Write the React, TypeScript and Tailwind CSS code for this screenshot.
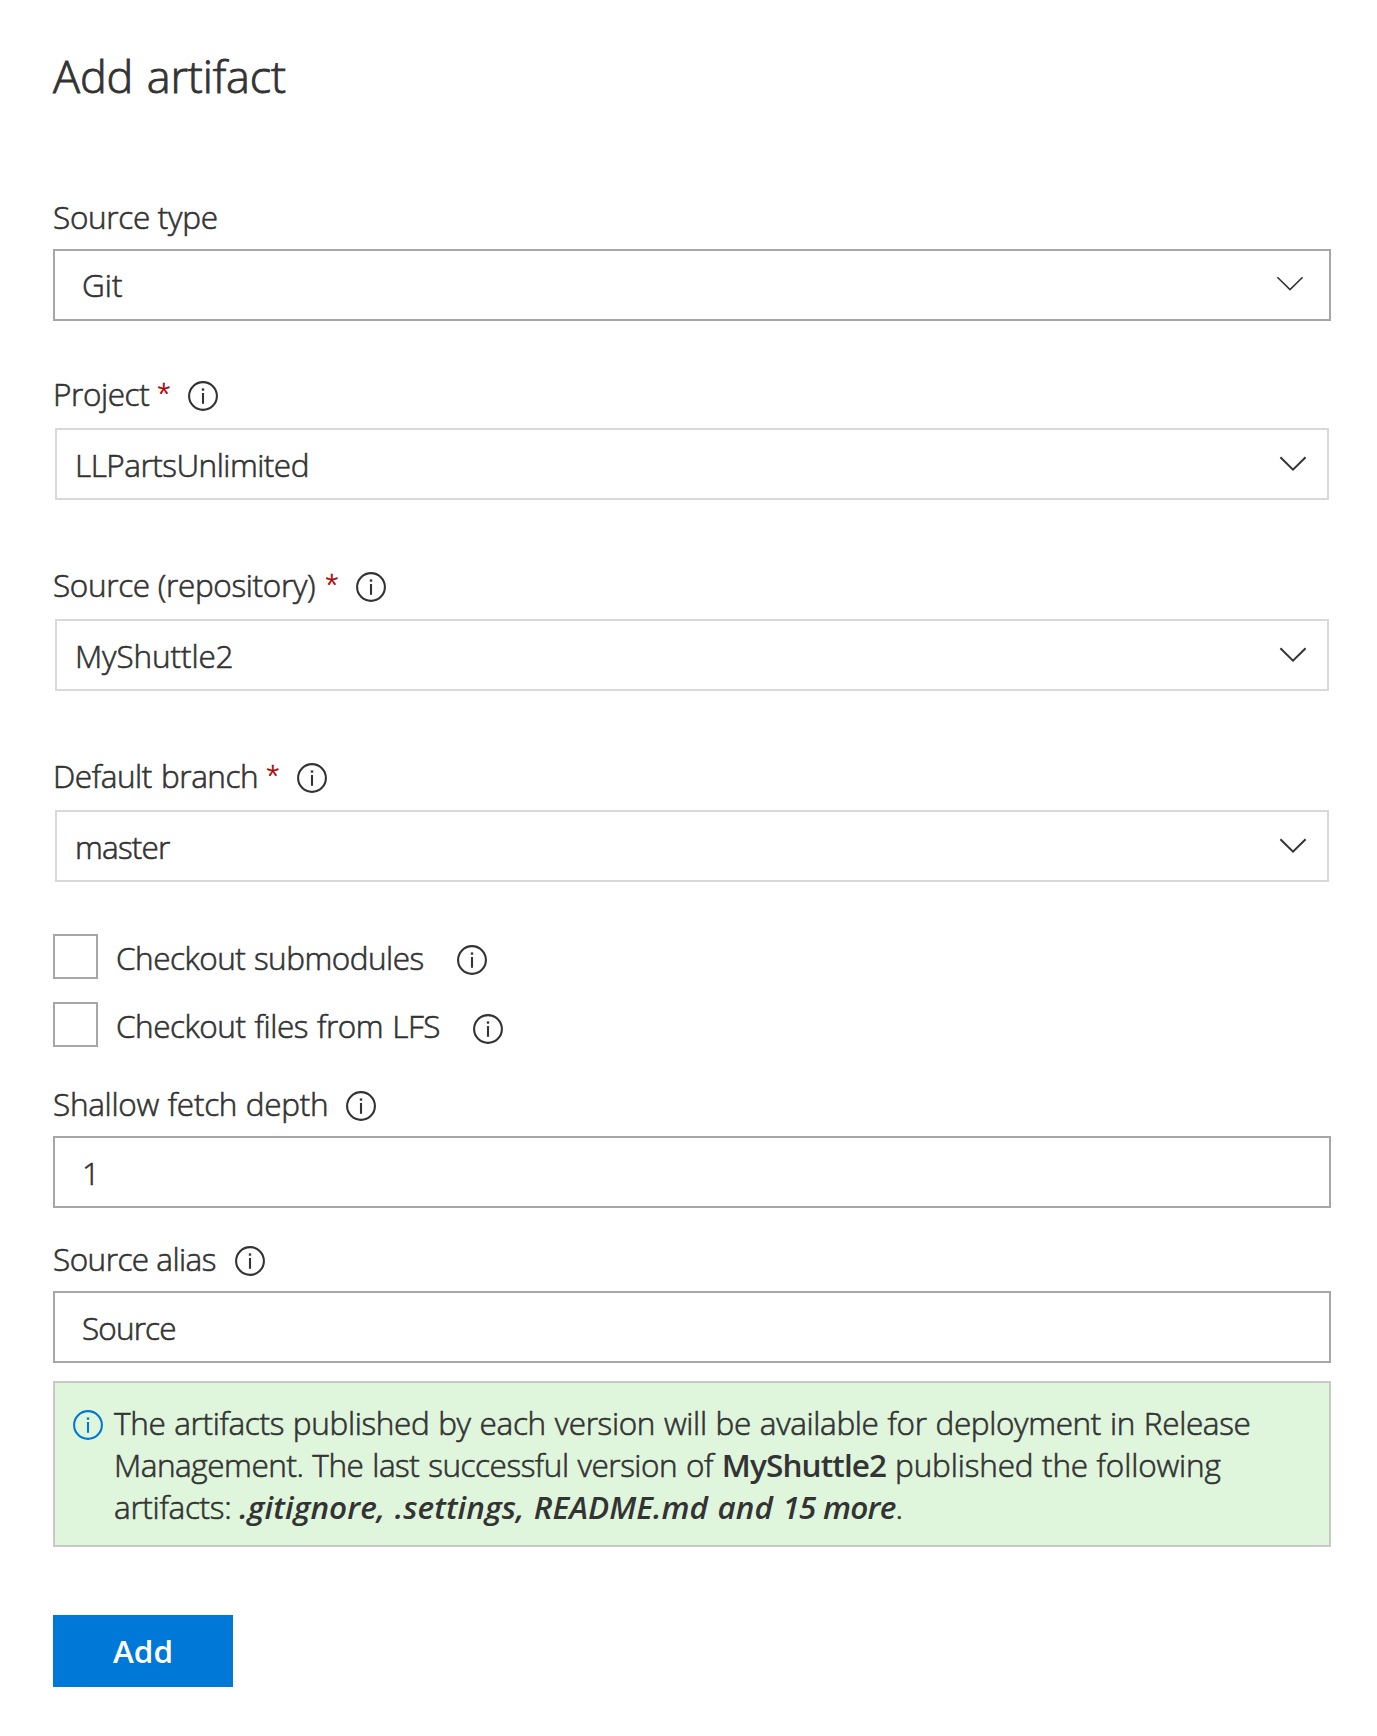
import type { ReactNode } from "react";

function InfoIcon({ className = "" }: { className?: string }) {
  return (
    <svg viewBox="0 0 30 30" className={`h-[30px] w-[30px] shrink-0 ${className}`} fill="none" stroke="currentColor">
      <circle cx="15" cy="15" r="13.9" strokeWidth="2.1" />
      <path d="M15 12V22.8" strokeWidth="2.1" />
      <path d="M15 7.4V9.7" strokeWidth="2.4" />
    </svg>
  );
}

function Chevron({ className = "", weight = 2 }: { className?: string; weight?: number }) {
  return (
    <svg viewBox="0 0 28 16" className={`h-4 w-7 shrink-0 ${className}`} fill="none" stroke="currentColor" strokeWidth={weight}>
      <path d="M1.4 1.2L14 13.6L26.6 1.2" />
    </svg>
  );
}

/** Field caption: text column of a set width, optional required mark, optional info icon. */
function Label({ text, width, spacing, required, info = true, className }: {
  text: string;
  width: string;
  spacing: string;
  required?: boolean;
  info?: boolean;
  className: string;
}) {
  return (
    <div className={`flex h-[42px] items-center ${className}`}>
      <span className={`shrink-0 whitespace-nowrap ${width} ${spacing}`}>{text}</span>
      {required && (
        <span className="-ml-px w-[31px] shrink-0 self-start text-[25px] leading-[38px] text-[#b00000] [-webkit-text-stroke:0.6px]">*</span>
      )}
      {info && <InfoIcon className="mt-[3px]" />}
    </div>
  );
}

function Field({ children, className }: { children: ReactNode; className: string }) {
  return <div className={`flex h-[72px] justify-between border-2 bg-white ${className}`}>{children}</div>;
}

function Check({ text, width, spacing, className, iconClass }: {
  text: string;
  width: string;
  spacing: string;
  className: string;
  iconClass: string;
}) {
  return (
    <div className={`flex h-[45px] ${className}`}>
      <div className="h-[45px] w-[45px] shrink-0 border-2 border-[#a6a6a6]" />
      <span className={`ml-[18px] mt-[3px] shrink-0 whitespace-nowrap ${width} ${spacing}`}>{text}</span>
      <InfoIcon className={iconClass} />
    </div>
  );
}

export default function App() {
  return (
    <main className="flex h-[1736px] w-[1377px] flex-col bg-white pl-[53px] pr-[46px] pt-[46px] font-['Open_Sans',sans-serif] text-[31.5px] font-light leading-[42px] text-[#333333] [-webkit-text-stroke:0.6px]">
      <h1 className="h-[60px] text-[45px] leading-[60px] tracking-[-0.15px] [-webkit-text-stroke:0.9px] [word-spacing:2px]">Add artifact</h1>

      <Label className="mt-[90px]" text="Source type" width="w-[180px]" spacing="tracking-[-0.3px]" info={false} />
      <Field className="mt-[11px] border-[#a6a6a6] pl-[27px] pr-[25px] pt-[13px]">
        <span>Git</span>
        <Chevron className="mt-[12px]" weight={1.6} />
      </Field>

      <Label className="mt-[52px]" text="Project" width="w-[105px]" spacing="tracking-[-0.4px]" required />
      <Field className="mx-[2px] mt-[13px] border-[#d9d9d9] pl-[18px] pr-[20px] pt-[14px]">
        <span className="tracking-[-0.5px]">LLPartsUnlimited</span>
        <Chevron className="mt-[12px]" />
      </Field>

      <Label className="mt-[64px]" text="Source (repository)" width="w-[273px]" spacing="tracking-[-0.32px]" required />
      <Field className="mx-[2px] mt-[13px] border-[#d9d9d9] pl-[18px] pr-[20px] pt-[14px]">
        <span className="tracking-[-0.1px]">MyShuttle2</span>
        <Chevron className="mt-[12px]" />
      </Field>

      <Label className="mt-[64px]" text="Default branch" width="w-[214px]" spacing="tracking-[-0.45px] [word-spacing:1.5px]" required />
      <Field className="mx-[2px] mt-[13px] border-[#d9d9d9] pl-[18px] pr-[20px] pt-[14px]">
        <span className="tracking-[-0.8px]">master</span>
        <Chevron className="mt-[12px]" />
      </Field>

      <Check className="mt-[52px]" text="Checkout submodules" width="w-[341px]" spacing="tracking-[-0.5px] [word-spacing:1px]" iconClass="mt-[11px]" />
      <Check className="mt-[23px]" text="Checkout files from LFS" width="w-[357px]" spacing="tracking-[-0.46px] [word-spacing:1.3px]" iconClass="mt-[12px]" />

      <Label className="mt-[36px]" text="Shallow fetch depth" width="w-[293px]" spacing="tracking-[-0.28px] [word-spacing:0.8px]" />
      <Field className="mt-[11px] border-[#a6a6a6] pl-[27px] pt-[14px]">
        <span>1</span>
      </Field>

      <Label className="mt-[30px]" text="Source alias" width="w-[182px]" spacing="tracking-[-0.53px]" />
      <Field className="mt-[11px] border-[#a6a6a6] pl-[27px] pt-[14px]">
        <span className="tracking-[-0.85px]">Source</span>
      </Field>

      <div className="mt-[18px] flex h-[166px] border-2 border-[#c8c8c8] bg-[#dff6dd] pl-[18px] pt-[19px]">
        <InfoIcon className="mt-[7.5px] text-[#0078d7]" />
        <div className="ml-[11px] whitespace-nowrap">
          <p className="tracking-[-0.36px] [word-spacing:1.1px]">
            The artifacts published by each version will be available for deployment in Release
          </p>
          <p className="tracking-[-0.46px] [word-spacing:1.1px]">
            Management. The last successful version of{" "}
            <b className="font-semibold tracking-[-0.87px] [-webkit-text-stroke:0px]">MyShuttle2</b>{" "}
            <span className="tracking-[-0.14px] [word-spacing:0.5px]">published the following</span>
          </p>
          <p className="tracking-[-0.3px]">
            artifacts:{" "}
            <em className="font-semibold tracking-[0.05px] [-webkit-text-stroke:0px]">
              <span className="[word-spacing:1.2px]">.gitignore, .settings, README.md and </span>
              <span className="tracking-[-0.75px]">15 more</span>
            </em>
            .
          </p>
        </div>
      </div>

      <button className="mt-[68px] h-[72px] w-[180px] shrink-0 bg-[#0078d7] font-semibold text-white [-webkit-text-stroke:0px]">
        Add
      </button>
    </main>
  );
}
